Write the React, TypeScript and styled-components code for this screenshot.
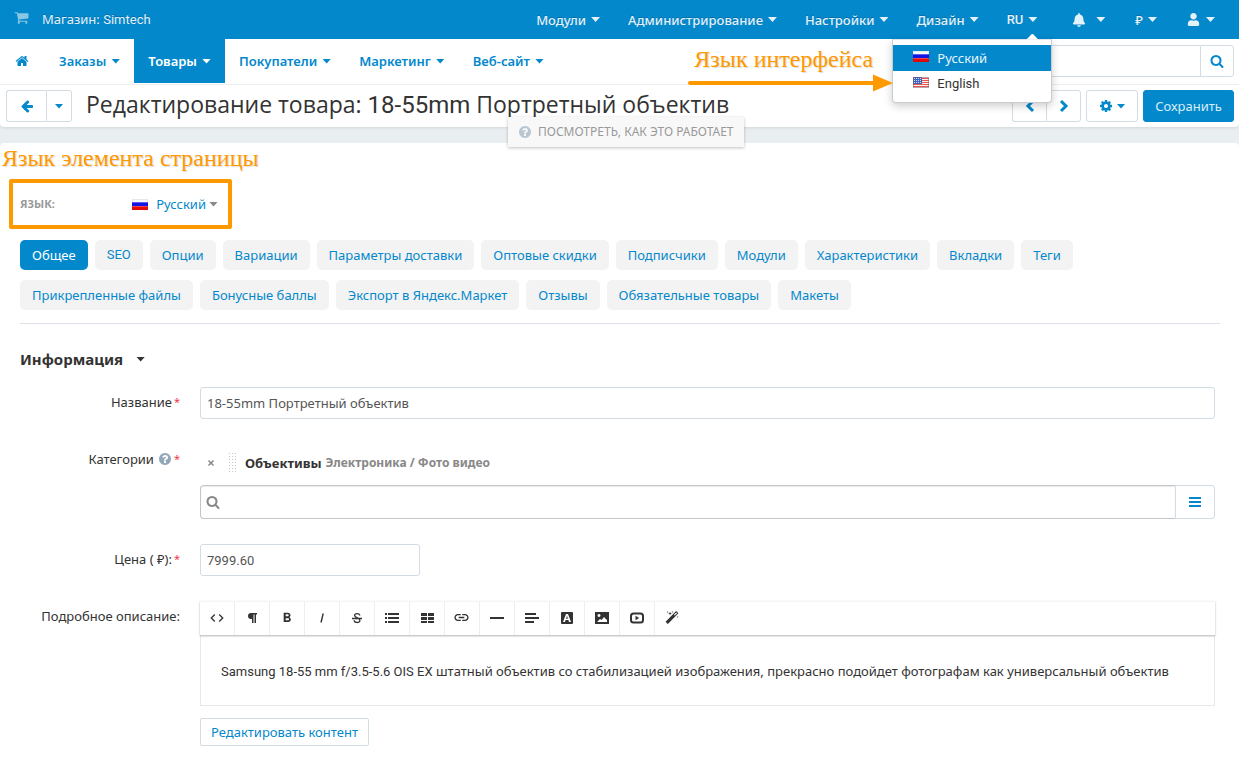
import React from 'react';
import styled, { createGlobalStyle, css } from 'styled-components';
import { FaBell, FaUser } from 'react-icons/fa';
import { MdCode, MdFormatBold, MdLink } from 'react-icons/md';

const blue = '#0388cc';
const line = '#d3dbe3';
const orange = '#ff9900';
const sans = `'Noto Sans', 'Open Sans', sans-serif`;
const latin = `Roboto, 'Noto Sans', sans-serif`;

const Global = createGlobalStyle`
  *, *::before, *::after { box-sizing: border-box; }
  body { margin: 0; background: #fff; color: #333; font: 13px/20px ${sans}; }
  button, input { font: inherit; }
  a { color: ${blue}; text-decoration: none; }
`;

/* ---------- shared parts ---------- */

const Latin = styled.span`
  font-family: ${latin};
`;

const Caret = styled.span<{ $gap?: number }>`
  flex: none;
  width: 9px;
  height: 5px;
  margin-left: ${(p) => p.$gap ?? 5}px;
  background: currentColor;
  clip-path: polygon(0 0, 100% 0, 50% 100%);
`;

const GlyphSvg = styled.svg<{ $size: number }>`
  flex: none;
  display: block;
  width: ${(p) => p.$size}px;
  height: ${(p) => p.$size}px;
  fill: currentColor;
`;

const glyphs = {
  home: 'M1472 992v480q0 26-19 45t-45 19h-384v-384h-256v384h-384q-26 0-45-19t-19-45v-480q0-1 .5-3t.5-3l575-474 575 474q1 2 1 6zm223-69l-62 74q-8 9-21 11h-3q-13 0-21-7l-692-577-692 577q-12 8-24 7-13-2-21-11l-62-74q-8-10-7-23.5t11-21.5l719-599q32-26 76-26t76 26l244 204v-195q0-14 9-23t23-9h192q14 0 23 9t9 23v408l219 182q10 8 11 21.5t-7 23.5z',
  cog: 'M1152 896q0-106-75-181t-181-75-181 75-75 181 75 181 181 75 181-75 75-181zm512-109v222q0 12-8 23t-20 13l-185 28q-19 54-39 91 35 50 107 138 10 12 10 25t-9 23q-27 37-99 108t-94 71q-12 0-26-9l-138-108q-44 23-91 38-16 136-29 186-7 28-36 28h-222q-14 0-24.5-8.5t-11.5-21.5l-28-184q-49-16-90-37l-141 107q-10 9-25 9-14 0-25-11-126-114-165-168-7-10-7-23 0-12 8-23 15-21 51-66.5t54-70.5q-27-50-41-99l-183-27q-13-2-21-12.5t-8-23.5v-222q0-12 8-23t19-13l186-28q14-46 39-92-40-57-107-138-10-12-10-24 0-10 9-23 26-36 98.5-107.5t94.5-71.5q13 0 26 10l138 107q44-23 91-38 16-136 29-186 7-28 36-28h222q14 0 24.5 8.5t11.5 21.5l28 184q49 16 90 37l142-107q9-9 24-9 13 0 25 10 129 119 165 170 7 8 7 22 0 12-8 23-15 21-51 66.5t-54 70.5q26 50 41 98l183 28q13 2 21 12.5t8 23.5z',
  search: 'M1216 832q0-185-131.5-316.5t-316.5-131.5-316.5 131.5-131.5 316.5 131.5 316.5 316.5 131.5 316.5-131.5 131.5-316.5zm512 832q0 52-38 90t-90 38q-54 0-90-38l-343-342q-179 124-399 124-143 0-273.5-55.5t-225-150-150-225-55.5-273.5 55.5-273.5 150-225 225-150 273.5-55.5 273.5 55.5 225 150 150 225 55.5 273.5q0 220-124 399l343 343q37 37 37 90z',
  left: 'M1664 896v128q0 53-32.5 90.5t-84.5 37.5h-704l293 294q38 36 38 90t-38 90l-75 76q-37 37-90 37-52 0-91-37l-651-652q-37-37-37-90 0-52 37-91l651-650q38-38 91-38 52 0 90 38l75 74q38 38 38 91t-38 91l-293 293h704q52 0 84.5 37.5t32.5 90.5z',
  help: 'M1024 1376v-192q0-14-9-23t-23-9h-192q-14 0-23 9t-9 23v192q0 14 9 23t23 9h192q14 0 23-9t9-23zm256-672q0-88-55.5-163t-138.5-116-170-41q-243 0-371 213-15 24 8 42l132 100q7 6 19 6 16 0 25-12 53-68 86-92 34-24 86-24 48 0 85.5 26t37.5 59q0 38-20 61t-68 45q-63 28-115.5 86.5t-52.5 125.5v36q0 14 9 23t23 9h192q14 0 23-9t9-23q0-19 21.5-49.5t54.5-49.5q32-18 49-28.5t46-35 44.5-48 28-60.5 12.5-81zm384 192q0 209-103 385.5t-279.5 279.5-385.5 103-385.5-103-279.5-279.5-103-385.5 103-385.5 279.5-279.5 385.5-103 385.5 103 279.5 279.5 103 385.5z',
  cart: 'M704 1536q0 52-38 90t-90 38-90-38-38-90 38-90 90-38 90 38 38 90zm896 0q0 52-38 90t-90 38-90-38-38-90 38-90 90-38 90 38 38 90zm128-1088v512q0 24-16.5 42.5t-40.5 21.5l-1044 122q13 60 13 70 0 16-24 64h920q26 0 45 19t19 45-19 45-45 19h-1024q-26 0-45-19t-19-45q0-11 8-31.5t16-36 21.5-40 15.5-29.5l-177-823h-204q-26 0-45-19t-19-45 19-45 45-19h256q16 0 28.5 6.5t19.5 15.5 13 24.5 8 26 5.5 29.5 4.5 26h1201q26 0 45 19t19 45z',
  magic: 'M1254 581l293-293-107-107-293 293zm447-293q0 27-18 45l-1286 1286q-18 18-45 18t-45-18l-198-198q-18-18-18-45t18-45l1286-1286q18-18 45-18t45 18l198 198q18 18 18 45zm-1351-190l98 30-98 30-30 98-30-98-98-30 98-30 30-98zm350 162l196 60-196 60-60 196-60-196-196-60 196-60 60-196zm930 478l98 30-98 30-30 98-30-98-98-30 98-30 30-98zm-640-640l98 30-98 30-30 98-30-98-98-30 98-30 30-98z',
};

const Glyph = ({ name, size = 14 }: { name: keyof typeof glyphs; size?: number }) => (
  <GlyphSvg $size={size} viewBox="0 0 1792 1792" aria-hidden="true">
    <path d={glyphs[name]} />
  </GlyphSvg>
);

const FlagSvg = styled.svg`
  flex: none;
  display: block;
  width: 16px;
  height: 11px;
`;

const RuFlag = () => (
  <FlagSvg viewBox="0 0 16 11" aria-hidden="true">
    <rect width="16" height="11" fill="#f7f7f7" />
    <rect y="3" width="16" height="4" fill="#1414e6" />
    <rect y="3" width="16" height="1" fill="#5c5cf0" />
    <rect y="7" width="16" height="4" fill="#e60a0a" />
    <rect y="7" width="16" height="1" fill="#f04848" />
    <rect x=".5" y=".5" width="15" height="10" fill="none" stroke="#000" strokeOpacity=".06" />
  </FlagSvg>
);

const UsFlag = () => (
  <FlagSvg viewBox="0 0 16 11" aria-hidden="true">
    <rect width="16" height="11" fill="#fbeeee" />
    {[1, 3, 5, 7, 9].map((y) => (
      <rect key={y} y={y} width="16" height="1" fill="#e2574c" />
    ))}
    <rect width="9" height="7" fill="#3f66b8" />
    {[1, 3, 5].map((y) =>
      [1, 3, 5, 7].map((x) => <rect key={`${x}-${y}`} x={x} y={y} width="1" height="1" fill="#c9d6f2" />),
    )}
    <rect x=".5" y=".5" width="15" height="10" fill="none" stroke="#7d5a6e" strokeOpacity=".5" />
  </FlagSvg>
);

/* ---------- top bar ---------- */

const TopBar = styled.header`
  display: flex;
  align-items: center;
  justify-content: space-between;
  height: 39px;
  padding: 0 24px 0 14px;
  background: ${blue};
  color: #e3f1fa;
  text-shadow: 0 -1px 0 rgba(0, 0, 0, 0.2);
`;

const Store = styled.a`
  display: flex;
  align-items: center;
  gap: 13px;
  color: inherit;
  ${GlyphSvg} {
    margin-bottom: 4px;
    opacity: 0.6;
  }
`;

const TopMenus = styled.nav`
  display: flex;
  gap: 35px;
`;

const TopGroup = styled.div<{ $gap: number }>`
  display: flex;
  align-items: center;
  gap: ${(p) => p.$gap}px;
`;

const TopItem = styled.div`
  position: relative;
`;

const TopButton = styled.button<{ $latin?: boolean }>`
  display: flex;
  align-items: center;
  height: 38px;
  padding: 0;
  border: 0;
  background: none;
  color: inherit;
  text-shadow: inherit;
  font-weight: 500;
  ${(p) => p.$latin && css`font-family: ${latin};`}
`;

const LanguageMenu = styled.div`
  position: absolute;
  z-index: 3;
  top: 38px;
  right: -15px;
  width: 160px;
  padding: 5px 0;
  border: 1px solid #c8cdd2;
  border-top-color: #dde3e8;
  border-radius: 0 0 4px 4px;
  background: #fff;
  box-shadow: 0 3px 8px rgba(0, 0, 0, 0.2);
  text-shadow: none;
  &::before {
    content: '';
    position: absolute;
    top: -6px;
    right: 13px;
    width: 12px;
    height: 6px;
    background: #fff;
    clip-path: polygon(50% 0, 100% 100%, 0 100%);
  }
`;

const LanguageOption = styled.a<{ $active?: boolean }>`
  display: flex;
  align-items: center;
  gap: 8px;
  height: 26px;
  padding-left: 20px;
  color: ${(p) => (p.$active ? '#e8f4fb' : '#333')};
  background: ${(p) => (p.$active ? blue : 'transparent')};
  ${FlagSvg} {
    margin-bottom: 3px;
  }
`;

/* ---------- annotations ---------- */

const Note = styled.span`
  display: block;
  color: ${orange};
  font: 24px/30px 'Liberation Serif', serif;
  text-shadow: 1px 1px 1px rgba(0, 0, 0, 0.14);
  white-space: nowrap;
`;

const MenuNote = styled.div`
  position: absolute;
  top: 4px;
  right: 100%;
  padding-left: 6px;
`;

const NoteArrow = styled.svg`
  display: block;
  width: 205px;
  height: 18px;
  margin-left: -6px;
`;

/* ---------- main navigation ---------- */

const NavBar = styled.div`
  display: flex;
  justify-content: space-between;
  height: 46px;
  padding: 0 5px 0 15px;
  border-bottom: 1px solid #f0f1f2;
`;

const NavLinks = styled.nav`
  display: flex;
  height: 44px;
`;

const HomeLink = styled.a`
  display: flex;
  align-items: center;
  padding-right: 16px;
`;

const NavLink = styled.a<{ $active?: boolean }>`
  display: flex;
  align-items: center;
  padding: 0 14px;
  font-weight: 600;
  color: ${(p) => (p.$active ? '#fff' : blue)};
  background: ${(p) => (p.$active ? blue : 'transparent')};
`;

const SearchForm = styled.form`
  display: flex;
  height: 32px;
  margin-top: 6px;
`;

const SearchInput = styled.input`
  width: 220px;
  border: 1px solid ${line};
  border-right: 0;
  border-radius: 3px 0 0 3px;
`;

/* ---------- buttons ---------- */

const ButtonGroup = styled.div`
  display: flex;
`;

const Button = styled.button<{ $w: number; $primary?: boolean; $join?: 'left' | 'right' }>`
  display: flex;
  align-items: center;
  justify-content: center;
  width: ${(p) => p.$w}px;
  height: 32px;
  padding: 0;
  border: 1px solid ${(p) => (p.$primary ? blue : line)};
  border-radius: ${(p) => (p.$join === 'left' ? '0 3px 3px 0' : p.$join === 'right' ? '3px 0 0 3px' : '3px')};
  ${(p) => p.$join === 'right' && css`border-right: 0;`}
  background: ${(p) => (p.$primary ? blue : '#fff')};
  color: ${(p) => (p.$primary ? '#d9edf8' : blue)};
  white-space: nowrap;
`;

/* ---------- title bar ---------- */

const Page = styled.div`
  background: #e9eef1;
`;

const TitleBar = styled.div`
  position: relative;
  display: flex;
  align-items: center;
  gap: 14px;
  height: 42px;
  padding: 0 5px 0 6px;
  border-radius: 0 0 4px 4px;
  background: #fff;
  box-shadow: 0 1px 3px rgba(0, 0, 0, 0.1);
`;

const Title = styled.h1`
  flex: 1;
  margin: 0;
  padding-bottom: 4px;
  font: 400 23px/30px 'Open Sans', ${sans};
  white-space: nowrap;
  ${Latin} {
    font-size: 24px;
  }
`;

const Actions = styled.div`
  display: flex;
  gap: 5px;
`;

const HintLink = styled.button`
  position: absolute;
  z-index: 2;
  top: 32px;
  left: 41%;
  display: flex;
  align-items: center;
  gap: 6px;
  height: 30px;
  padding: 0 10px;
  border: 0;
  background: #f8f8f8;
  box-shadow: 0 1px 3px rgba(0, 0, 0, 0.25);
  color: #999;
  font-size: 12px;
  white-space: nowrap;
  ${GlyphSvg} {
    color: #b8c6d1;
  }
`;

/* ---------- content ---------- */

const Panel = styled.main`
  margin-top: 16px;
  padding-bottom: 25px;
  border-radius: 4px 4px 0 0;
  background: #fff;
`;

const PanelNote = styled.div`
  height: 36px;
  padding-left: 2px;
`;

const ContentLanguage = styled.div`
  display: flex;
  align-items: center;
  justify-content: space-between;
  width: 223px;
  height: 50px;
  margin-left: 9px;
  padding: 0 10px 0 7px;
  border: 4px solid ${orange};
  border-radius: 2px;
`;

const LanguageLabel = styled.label`
  color: #999;
  font-size: 11px;
  font-weight: 700;
`;

const LanguageButton = styled.button`
  display: flex;
  align-items: center;
  padding: 0;
  border: 0;
  background: none;
  color: ${blue};
  ${FlagSvg} {
    margin-right: 8px;
  }
  ${Caret} {
    color: #888;
  }
`;

const Tabs = styled.nav`
  display: flex;
  flex-wrap: wrap;
  gap: 10px 7px;
  margin: 11px 19px 0 20px;
  padding-bottom: 13px;
  border-bottom: 1px solid #dfe1ea;
`;

const Tab = styled.a<{ $active?: boolean; $latin?: boolean }>`
  height: 30px;
  padding: 0 12px;
  border-radius: 5px;
  background: ${(p) => (p.$active ? blue : '#f3f3f3')};
  color: ${(p) => (p.$active ? '#fff' : blue)};
  line-height: 30px;
  ${(p) => p.$latin && css`font-family: ${latin};`}
`;

const SectionTitle = styled.h2`
  display: flex;
  align-items: center;
  margin: 23px 20px 16px;
  font-size: 15px;
  line-height: 24px;
  color: #333;
`;

const Form = styled.form`
  display: grid;
  gap: 25px;
  padding: 0 24px 0 20px;
`;

const Field = styled.div`
  display: grid;
  grid-template-columns: 160px minmax(0, 1fr);
  column-gap: 20px;
  align-items: start;
`;

const Label = styled.label`
  display: flex;
  align-items: center;
  justify-content: flex-end;
  height: 30px;
  ${GlyphSvg} {
    margin-left: 4px;
    color: #92a7b8;
  }
`;

const Required = styled.span`
  margin-left: 2px;
  color: #f0364a;
  font-size: 11px;
`;

const TextInput = styled.input<{ $w?: string; $latin?: boolean }>`
  width: ${(p) => p.$w ?? '100%'};
  height: 32px;
  padding: 0 6px;
  border: 1px solid ${line};
  border-radius: 3px;
  color: #555;
  outline: none;
  ${(p) => p.$latin && css`font-family: ${latin};`}
`;

const Category = styled.div`
  display: flex;
  align-items: center;
  height: 37px;
  margin-bottom: 4px;
  padding-left: 7px;
  font-weight: 700;
`;

const RemoveButton = styled.button`
  width: 8px;
  padding: 0;
  border: 0;
  background: none;
  color: #888;
  svg {
    display: block;
    width: 8px;
    height: 8px;
  }
`;

const DragHandle = styled.svg`
  width: 8px;
  height: 20px;
  margin: 0 8px 0 14px;
  fill: #c4c4c4;
`;

const CategoryPath = styled.span`
  margin-left: 4px;
  color: #888;
  font-size: 12px;
  line-height: 22px;
`;

const CategoryPicker = styled.div`
  display: flex;
  height: 34px;
  ${Button} {
    height: 34px;
  }
`;

const CategorySearch = styled.label`
  flex: 1;
  display: flex;
  align-items: center;
  padding-left: 5px;
  border: 1px solid #c3c6c9;
  border-right: 0;
  border-radius: 4px 0 0 4px;
  box-shadow: inset 0 1px 1px rgba(0, 0, 0, 0.08);
  color: #888;
  input {
    flex: 1;
    border: 0;
    outline: none;
    background: none;
  }
`;

const Toolbar = styled.div`
  position: relative;
  display: flex;
  height: 34px;
  border-top: 1px solid #f5f5f5;
  box-shadow: 0 1px 2px rgba(0, 0, 0, 0.3);
`;

const Tool = styled.button`
  display: flex;
  align-items: center;
  justify-content: center;
  width: 35px;
  padding: 0 1px 2px 0;
  border: 0;
  border-right: 1px solid #eee;
  background: none;
  color: #333;
  svg {
    display: block;
  }
  &:last-child {
    border-right: 0;
  }
`;

const EditorBody = styled.div`
  min-height: 70px;
  padding: 26px 20px 23px;
  border: 1px solid #e8e8e8;
  border-top: 0;
  outline: none;
`;

const EditContent = styled.button`
  height: 28px;
  margin-top: 12px;
  padding: 0 10px;
  border: 1px solid ${line};
  border-radius: 2px;
  background: #fff;
  color: ${blue};
`;

const icon = (children: React.ReactNode) => (
  <svg width="14" height="14" viewBox="0 0 14 14" fill="currentColor" aria-hidden="true">
    {children}
  </svg>
);

const tools: [string, React.ReactNode][] = [
  ['Код', <MdCode size={16} />],
  ['Формат', icon(<path d="M6 2h6v1.500h-1V12H9.500V3.500H8.500V12H7V8H6a3 3 0 0 1 0-6z" />)],
  ['Жирный', <MdFormatBold size={16} />],
  ['Курсив', icon(<path d="M8.200 2.500L6 11.500" fill="none" stroke="currentColor" strokeWidth="1.400" />)],
  [
    'Зачёркнутый',
    icon(
      <path
        d="M9.800 4.500C9.500 1.800 4.600 2 4.600 4.600 4.600 6.700 9.900 6.800 9.900 9.400 9.900 12.200 4.300 12.200 4.200 9.200M2 7.500h10"
        fill="none"
        stroke="currentColor"
        strokeWidth="1.300"
      />,
    ),
  ],
  ['Список', icon(<path d="M0 2h2v2H0zM0 6h2v2H0zM0 10h2v2H0zM3 2h11v2H3zM3 6h11v2H3zM3 10h11v2H3z" />)],
  ['Таблица', icon(<path d="M1 2h6v3H1zM8 2h6v3H8zM1 6h6v3H1zM8 6h6v3H8zM1 10h6v2H1zM8 10h6v2H8z" />)],
  ['Ссылка', <MdLink size={17} />],
  ['Линия', icon(<path d="M0 6h14v2H0z" />)],
  ['Выравнивание', icon(<path d="M0 2h11v2H0zM0 6h14v2H0zM0 10h9v2H0z" />)],
  [
    'Цвет текста',
    icon(<path fillRule="evenodd" d="M2 1h10q1 0 1 1v10q0 1-1 1H2q-1 0-1-1V2q0-1 1-1zM6 3L3 11h2l.6-2h2.8l.6 2h2L8 3zM7 4.800l.9 2.900H6.100z" />),
  ],
  [
    'Изображение',
    icon(<path fillRule="evenodd" d="M0 1h14v12H0zM2 11h10v-2L9 6 6.500 9 5 8zM4 3a1.500 1.500 0 1 0 .01 0z" />),
  ],
  [
    'Видео',
    icon(
      <>
        <rect x="1" y="2.500" width="12" height="9" rx="2.500" fill="none" stroke="currentColor" strokeWidth="2" />
        <path d="M5.500 4.800v4.400L9.200 7z" />
      </>,
    ),
  ],
  ['Очистить', <Glyph name="magic" />],
];

const Chevron = ({ flip }: { flip?: boolean }) => (
  <svg width="10" height="14" viewBox="0 0 10 14" aria-hidden="true">
    <path d={flip ? 'M2 2l5 5-5 5' : 'M8 2L3 7l5 5'} fill="none" stroke="currentColor" strokeWidth="3" />
  </svg>
);

const productTabs = ['Опции', 'Вариации', 'Параметры доставки', 'Оптовые скидки', 'Подписчики', 'Модули', 'Характеристики', 'Вкладки', 'Теги', 'Прикрепленные файлы', 'Бонусные баллы', 'Экспорт в Яндекс.Маркет', 'Отзывы', 'Обязательные товары', 'Макеты'];

export default function App() {
  return (
    <>
      <Global />
      <TopBar>
        <Store href="#">
          <Glyph name="cart" size={15} />
          <span>
            Магазин: <Latin>Simtech</Latin>
          </span>
        </Store>
        <TopMenus>
          <TopGroup $gap={28}>
            {['Модули', 'Администрирование', 'Настройки', 'Дизайн'].map((name) => (
              <TopButton key={name}>
                {name}
                <Caret />
              </TopButton>
            ))}
            <TopItem>
              <TopButton $latin>
                RU
                <Caret />
              </TopButton>
              <LanguageMenu>
                <LanguageOption href="#" $active>
                  <RuFlag />
                  Русский
                </LanguageOption>
                <LanguageOption href="#">
                  <UsFlag />
                  <Latin>English</Latin>
                </LanguageOption>
                <MenuNote>
                  <Note>Язык интерфейса</Note>
                  <NoteArrow viewBox="0 0 205 18" aria-hidden="true">
                    <path d="M2 9h185" stroke={orange} strokeWidth="4" strokeLinecap="round" />
                    <path d="M185 0.500l20 8.500-20 8.500z" fill={orange} />
                  </NoteArrow>
                </MenuNote>
              </LanguageMenu>
            </TopItem>
          </TopGroup>
          <TopGroup $gap={30}>
            <TopButton aria-label="Уведомления">
              <FaBell size={14} />
              <Caret $gap={10} />
            </TopButton>
            <TopButton>
              ₽
              <Caret />
            </TopButton>
            <TopButton aria-label="Профиль">
              <FaUser size={13} />
              <Caret $gap={6} />
            </TopButton>
          </TopGroup>
        </TopMenus>
      </TopBar>
      <NavBar>
        <NavLinks>
          <HomeLink href="#" aria-label="Главная">
            <Glyph name="home" />
          </HomeLink>
          {['Заказы', 'Товары', 'Покупатели', 'Маркетинг', 'Веб-сайт'].map((name) => (
            <NavLink key={name} href="#" $active={name === 'Товары'}>
              {name}
              <Caret />
            </NavLink>
          ))}
        </NavLinks>
        <SearchForm>
          <SearchInput aria-label="Поиск" />
          <Button type="button" $w={34} $join="left" aria-label="Найти">
            <Glyph name="search" />
          </Button>
        </SearchForm>
      </NavBar>
      <Page>
        <TitleBar>
          <ButtonGroup>
            <Button $w={40} $join="right" aria-label="Назад">
              <Glyph name="left" />
            </Button>
            <Button $w={26} $join="left" aria-label="История">
              <Caret $gap={0} />
            </Button>
          </ButtonGroup>
          <Title>
            Редактирование товара: <Latin>18-55mm</Latin> Портретный объектив
          </Title>
          <Actions>
            <ButtonGroup>
              <Button $w={34} $join="right" aria-label="Предыдущий">
                <Chevron />
              </Button>
              <Button $w={35} $join="left" aria-label="Следующий">
                <Chevron flip />
              </Button>
            </ButtonGroup>
            <Button $w={52} aria-label="Действия">
              <Glyph name="cog" />
              <Caret $gap={4} />
            </Button>
            <Button $w={91} $primary>
              Сохранить
            </Button>
          </Actions>
          <HintLink>
            <Glyph name="help" />
            ПОСМОТРЕТЬ, КАК ЭТО РАБОТАЕТ
          </HintLink>
        </TitleBar>
        <Panel>
          <PanelNote>
            <Note>Язык элемента страницы</Note>
          </PanelNote>
          <ContentLanguage>
            <LanguageLabel htmlFor="content-language">ЯЗЫК:</LanguageLabel>
            <LanguageButton id="content-language">
              <RuFlag />
              Русский
              <Caret $gap={3} />
            </LanguageButton>
          </ContentLanguage>
          <Tabs>
            <Tab href="#" $active>
              Общее
            </Tab>
            <Tab href="#" $latin>
              SEO
            </Tab>
            {productTabs.map((name) => (
              <Tab key={name} href="#">
                {name}
              </Tab>
            ))}
          </Tabs>
          <SectionTitle>
            Информация
            <Caret $gap={13} />
          </SectionTitle>
          <Form>
            <Field>
              <Label htmlFor="name">
                Название<Required>*</Required>
              </Label>
              <TextInput id="name" defaultValue="18-55mm Портретный объектив" />
            </Field>
            <Field>
              <Label htmlFor="category">
                Категории
                <Glyph name="help" />
                <Required>*</Required>
              </Label>
              <div>
                <Category>
                  <RemoveButton type="button" aria-label="Удалить">
                    <svg viewBox="0 0 8 8" aria-hidden="true">
                      <path d="M1.500 1.500l5 5m0-5l-5 5" stroke="currentColor" strokeWidth="1.500" />
                    </svg>
                  </RemoveButton>
                  <DragHandle viewBox="0 0 8 20" aria-hidden="true">
                    {[0, 3, 6].map((x) =>
                      [0, 3, 6, 9, 12, 15, 18].map((y) => (
                        <rect key={`${x}-${y}`} x={x} y={y} width="1" height="1" />
                      )),
                    )}
                  </DragHandle>
                  Объективы
                  <CategoryPath>Электроника / Фото видео</CategoryPath>
                </Category>
                <CategoryPicker>
                  <CategorySearch>
                    <Glyph name="search" />
                    <input id="category" aria-label="Категория" />
                  </CategorySearch>
                  <Button type="button" $w={40} $join="left" aria-label="Список категорий">
                    <svg width="12" height="10" viewBox="0 0 12 10" fill="currentColor" aria-hidden="true">
                      <path d="M0 0h12v2H0zM0 4h12v2H0zM0 8h12v2H0z" />
                    </svg>
                  </Button>
                </CategoryPicker>
              </div>
            </Field>
            <Field>
              <Label htmlFor="price">
                Цена ( ₽):<Required>*</Required>
              </Label>
              <TextInput id="price" $w="220px" $latin defaultValue="7999.60" />
            </Field>
            <Field>
              <Label as="span">Подробное описание:</Label>
              <div>
                <Toolbar>
                  {tools.map(([name, glyph]) => (
                    <Tool key={name} type="button" aria-label={name}>
                      {glyph}
                    </Tool>
                  ))}
                </Toolbar>
                <EditorBody>
                  <Latin>Samsung 18-55 mm f/3.5-5.6 OIS EX</Latin> штатный объектив со стабилизацией изображения,
                  прекрасно подойдет фотографам как универсальный объектив
                </EditorBody>
                <EditContent type="button">Редактировать контент</EditContent>
              </div>
            </Field>
          </Form>
        </Panel>
      </Page>
    </>
  );
}
